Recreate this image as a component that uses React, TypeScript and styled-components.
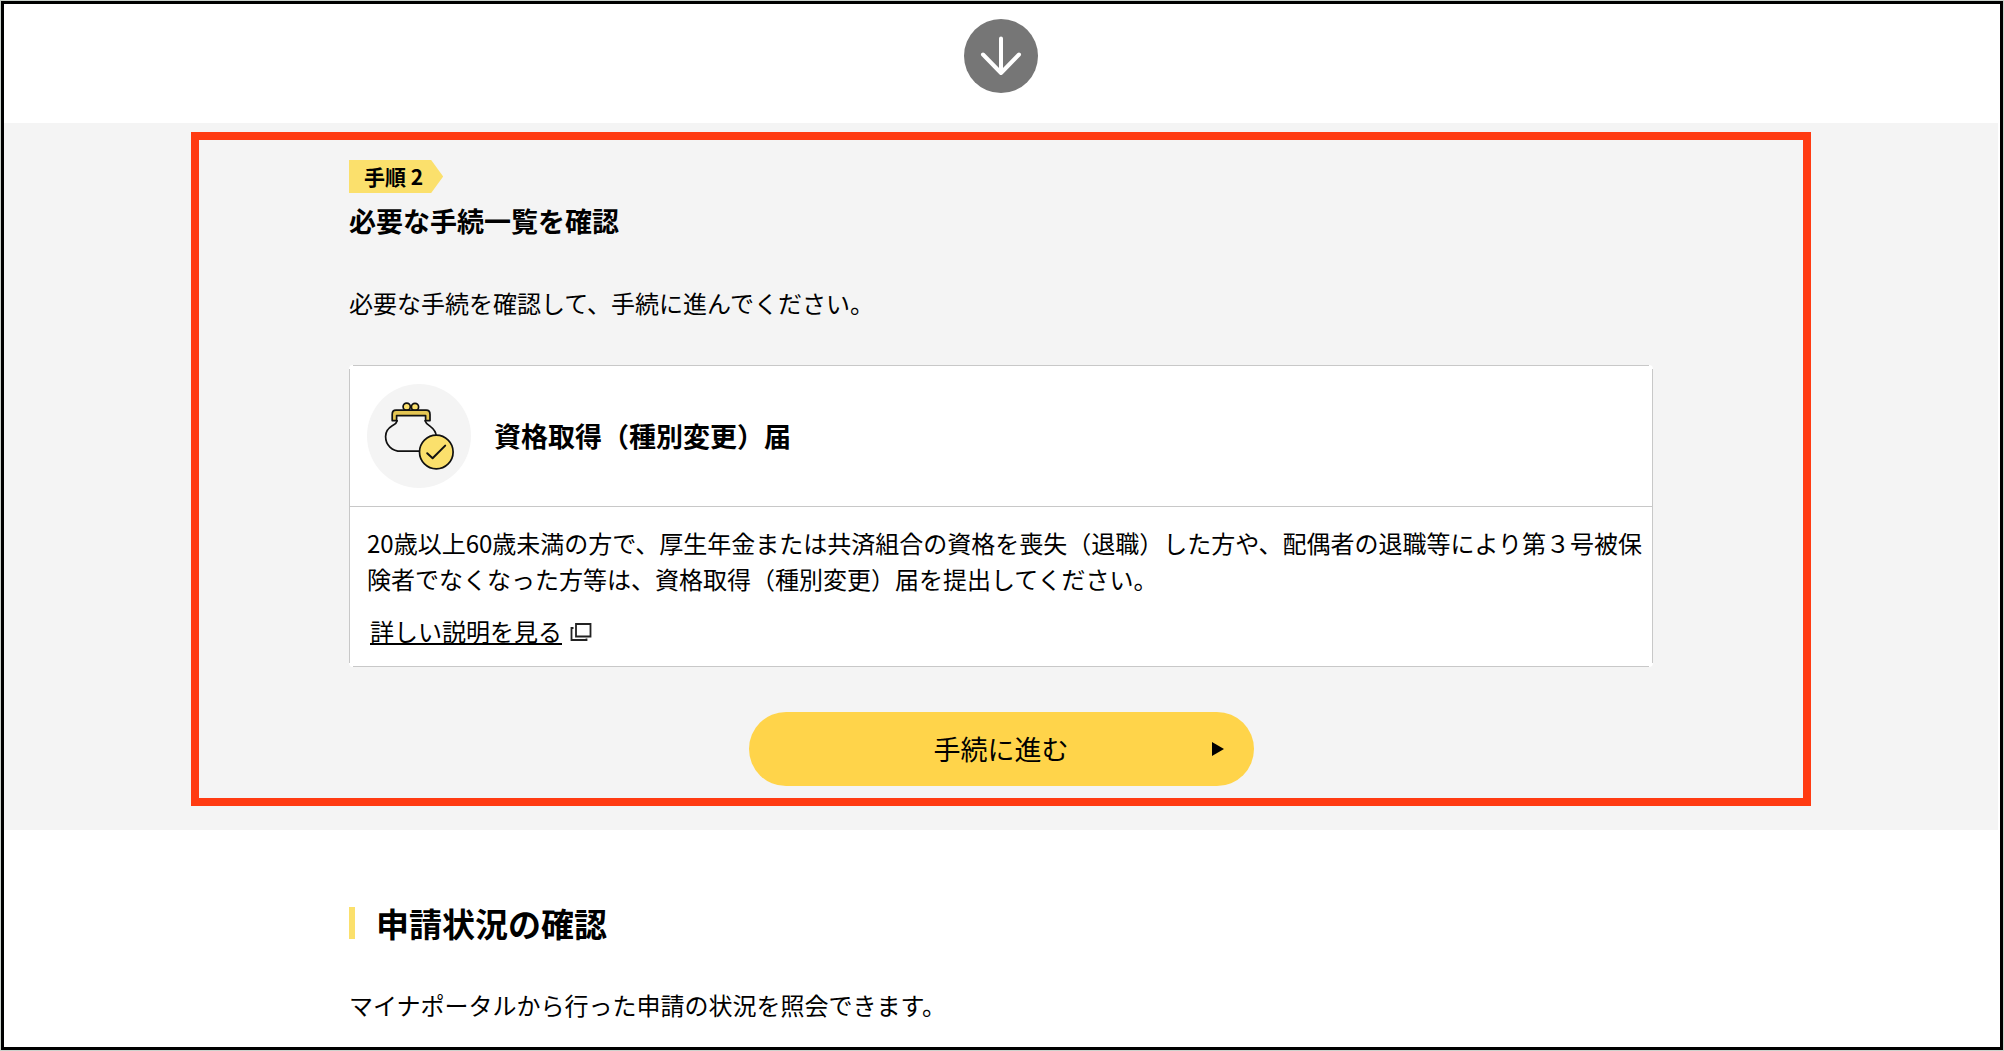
import React from 'react';
import styled, { createGlobalStyle } from 'styled-components';

const GlobalStyle = createGlobalStyle`
  *, *::before, *::after { box-sizing: border-box; }
  body {
    margin: 0;
    background: #cbd2cc;
    color: #000;
    font-family: "Noto Sans CJK JP", "Noto Sans", sans-serif;
    font-size: 24px;
    line-height: 36px;
  }
  h2, h3, h4, p { margin: 0; }
`;

const Page = styled.main`
  display: flow-root;
  min-height: calc(100vh - 2px);
  margin: 1px;
  padding-right: 2px;
  background: #fff;
  border: 3px solid #000;
`;

const StepArrow = styled.div`
  display: flex;
  justify-content: center;
  padding: 15px 0 30px;
`;

const StepSection = styled.section`
  padding: 9px 24px 24px;
  background: #f4f4f4;
`;

const Highlight = styled.div`
  max-width: 1620px;
  margin: 0 auto;
  padding: 20px 24px 12px;
  border: 8px solid #ff3b12;
`;

const Container = styled.div`
  max-width: 1304px;
  margin: 0 auto;
`;

const StepBadge = styled.p`
  width: max-content;
  height: 33px;
  padding: 0 20px 0 15px;
  background: #fbe06c;
  clip-path: polygon(0 0, calc(100% - 12px) 0, 100% 50%, calc(100% - 12px) 100%, 0 100%);
  font-size: 21px;
  font-weight: 700;
  line-height: 32px;
`;

const StepTitle = styled.h3`
  margin-top: 8px;
  font-size: 27px;
  font-weight: 700;
  line-height: 40px;
`;

const Lead = styled.p`
  margin-top: 44px;
`;

const Card = styled.article`
  margin-top: 44px;
  padding: 1px;
  border-radius: 4px;
  background:
    linear-gradient(#c8c8c8, #c8c8c8) top / calc(100% - 8px) 1px no-repeat,
    linear-gradient(#c8c8c8, #c8c8c8) bottom / calc(100% - 8px) 1px no-repeat,
    linear-gradient(#c8c8c8, #c8c8c8) left / 1px calc(100% - 8px) no-repeat,
    linear-gradient(#c8c8c8, #c8c8c8) right / 1px calc(100% - 8px) no-repeat,
    #fff;
`;

const CardHeader = styled.header`
  display: flex;
  align-items: center;
  gap: 23px;
  padding: 18px 17px;
  border-bottom: 1px solid #c8c8c8;
`;

const CardTitle = styled.h4`
  font-size: 27px;
  font-weight: 700;
  line-height: 40px;
`;

const CardBody = styled.div`
  padding: 18px 4px 17px 17px;
`;

const DetailLink = styled.a`
  display: flex;
  align-items: center;
  gap: 8px;
  width: max-content;
  margin-top: 16px;
  padding-left: 3px;
  color: inherit;
  text-decoration: none;

  span {
    text-decoration: underline;
    text-decoration-thickness: 2px;
    text-underline-offset: 2px;
    text-decoration-skip-ink: none;
  }
`;

const ProceedButton = styled.button`
  display: grid;
  grid-template-columns: 1fr auto 1fr;
  align-items: center;
  width: 100%;
  max-width: 505px;
  height: 74px;
  margin: 45px auto 0;
  padding: 0 30px;
  border: 0;
  border-radius: 37px;
  background: #ffd44a;
  color: #000;
  font: inherit;
  font-size: 27px;
  cursor: pointer;

  span { grid-column: 2; }
  svg { justify-self: end; }
`;

const StatusSection = styled.section`
  padding: 73px 24px 24px;
`;

const StatusTitle = styled.h2`
  display: flex;
  align-items: center;
  gap: 21px;
  font-size: 33px;
  font-weight: 700;
  line-height: 40px;

  &::before {
    content: "";
    width: 6px;
    height: 32px;
    background: #fbe06c;
  }
`;

const ArrowDownIcon = () => (
  <svg width="74" height="74" viewBox="0 0 74 74" aria-hidden="true">
    <circle cx="37" cy="37" r="37" fill="#767676" />
    <path d="M37 19.5V54M19 35.5L37 54L55 35.5" fill="none" stroke="#fff" strokeWidth="4" strokeLinecap="round" strokeLinejoin="round" />
  </svg>
);

const PurseIcon = () => (
  <svg width="104" height="104" viewBox="0 0 104 104" aria-hidden="true">
    <circle cx="52" cy="52" r="52" fill="#f4f4f4" />
    <g stroke="#111" strokeWidth="1.7" strokeLinecap="round" strokeLinejoin="round">
      <path d="M30.2 36.8C29.6 39.6 27.6 40.4 25.2 41.8C21 44.4 18.6 48 18.6 52.4C18.6 61 25 67.2 34 67.2H54M58 36.8C59 39.8 61.4 40.8 63.6 42.6C67 45.2 69 48 69.2 52" fill="none" />
      <circle cx="39.7" cy="22.7" r="3.6" fill="#fbe06c" />
      <circle cx="48" cy="23" r="3.6" fill="#fbe06c" />
      <path d="M25.2 36.6V30.4C25.2 27.6 26.4 26.2 29 26.2H59.2C61.8 26.2 63 27.6 63 30.4V36.6H58.6V31.6H29.6V36.6Z" fill="#e5c653" />
      <circle cx="69.3" cy="68" r="16.8" fill="#fbe06c" />
      <path d="M60.2 69.2L65.6 74.2L78.2 61.6" fill="none" strokeWidth="2" />
    </g>
  </svg>
);

const NewWindowIcon = () => (
  <svg width="22" height="20" viewBox="0 0 22 20" aria-label="別ウィンドウで開く" role="img">
    <path d="M6 3H20.5V15.5H6ZM3.5 7H1.5V19H16.5V17.5" fill="none" stroke="#222" strokeWidth="1.8" />
  </svg>
);

const PlayIcon = () => (
  <svg width="12" height="16" viewBox="0 0 12 16" aria-hidden="true">
    <path d="M0 1L12 8L0 15Z" fill="#000" />
  </svg>
);

export default function App() {
  return (
    <>
      <GlobalStyle />
      <Page>
        <StepArrow>
          <ArrowDownIcon />
        </StepArrow>
        <StepSection>
          <Highlight>
            <Container>
              <StepBadge>手順 2</StepBadge>
              <StepTitle>必要な手続一覧を確認</StepTitle>
              <Lead>必要な手続を確認して、手続に進んでください。</Lead>
              <Card>
                <CardHeader>
                  <PurseIcon />
                  <CardTitle>資格取得（種別変更）届</CardTitle>
                </CardHeader>
                <CardBody>
                  <p>
                    20歳以上60歳未満の方で、厚生年金または共済組合の資格を喪失（退職）した方や、配偶者の退職等により第３号被保険者でなくなった方等は、資格取得（種別変更）届を提出してください。
                  </p>
                  <DetailLink href="#detail">
                    <span>詳しい説明を見る</span>
                    <NewWindowIcon />
                  </DetailLink>
                </CardBody>
              </Card>
              <ProceedButton type="button">
                <span>手続に進む</span>
                <PlayIcon />
              </ProceedButton>
            </Container>
          </Highlight>
        </StepSection>
        <StatusSection>
          <Container>
            <StatusTitle>申請状況の確認</StatusTitle>
            <Lead>マイナポータルから行った申請の状況を照会できます。</Lead>
          </Container>
        </StatusSection>
      </Page>
    </>
  );
}
